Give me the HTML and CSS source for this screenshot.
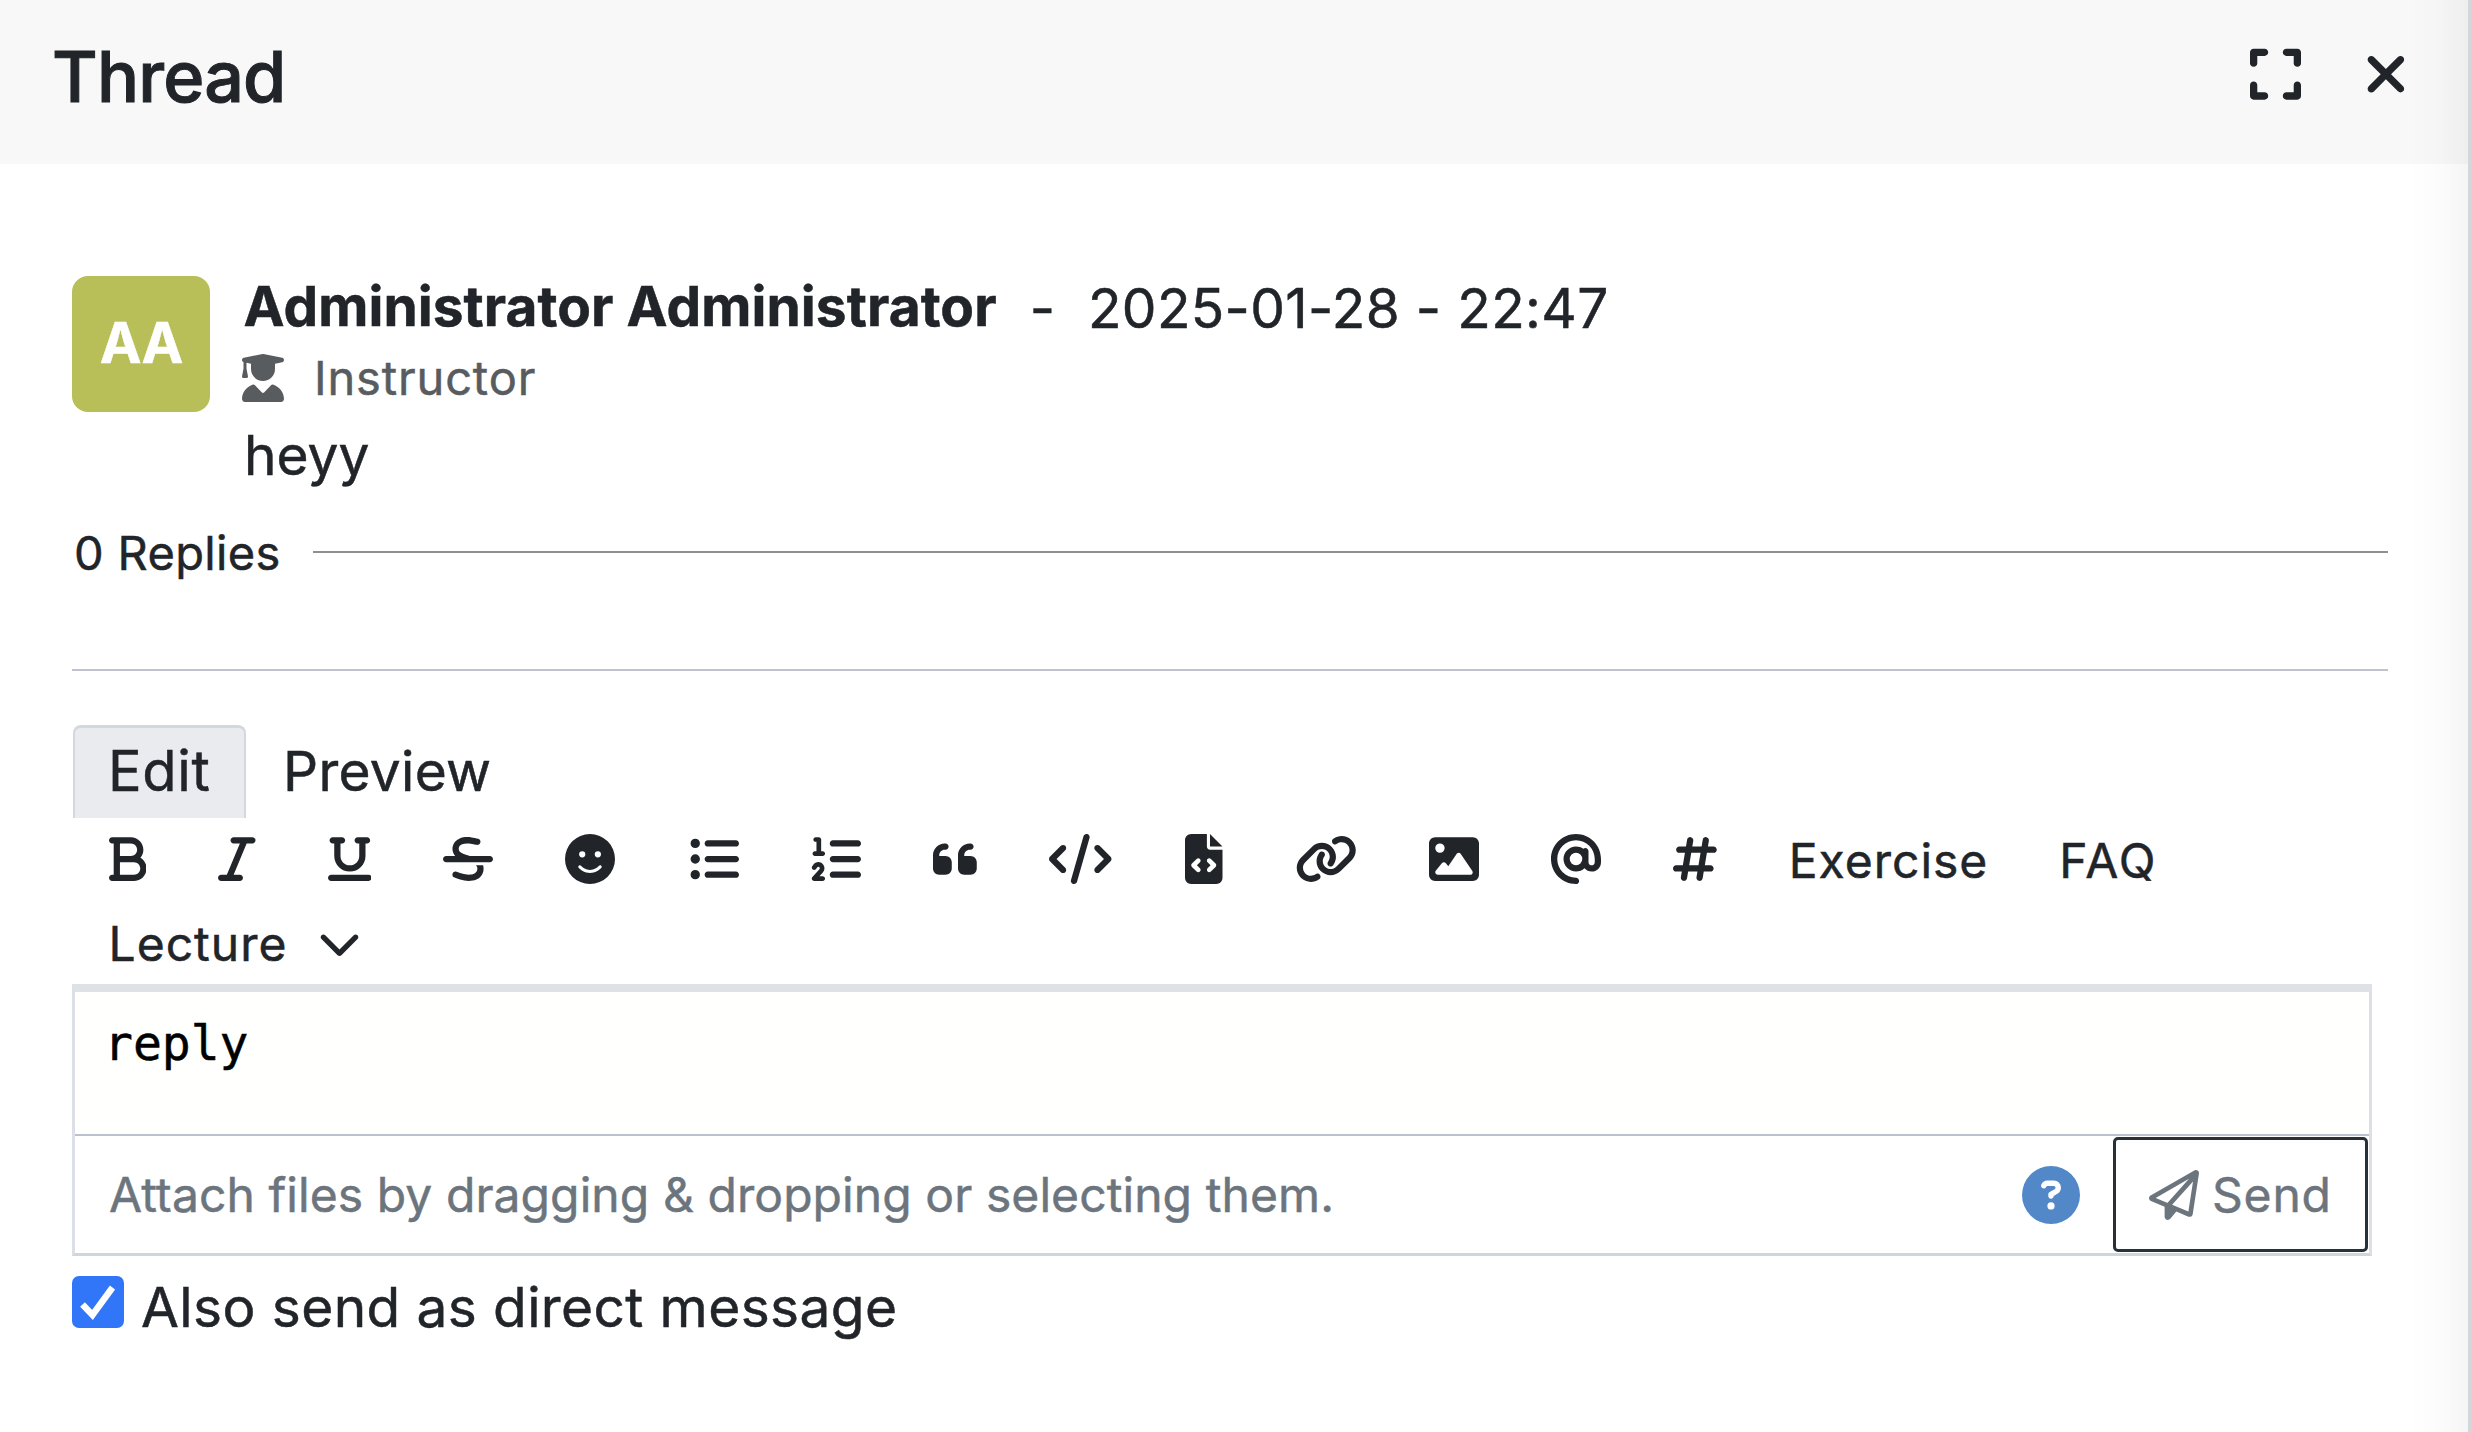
FILE: index.html
```html
<!DOCTYPE html>
<html lang="en">
<head>
<meta charset="utf-8">
<title>Thread</title>
<link rel="stylesheet" href="styles.css">
</head>
<body>
<aside class="panel">
  <header class="panel-header">
    <h1 class="panel-title">Thread</h1>
    <div class="panel-actions">
      <svg class="icon icon-expand" viewBox="0 0 448 512"><path d="M32 32C14.3 32 0 46.3 0 64v96c0 17.7 14.3 32 32 32s32-14.3 32-32V96h64c17.7 0 32-14.3 32-32s-14.3-32-32-32H32zM64 352c0-17.7-14.3-32-32-32s-32 14.3-32 32v96c0 17.7 14.3 32 32 32h96c17.7 0 32-14.3 32-32s-14.3-32-32-32H64V352zM320 32c-17.7 0-32 14.3-32 32s14.3 32 32 32h64v64c0 17.7 14.3 32 32 32s32-14.3 32-32V64c0-17.7-14.3-32-32-32H320zM448 352c0-17.7-14.3-32-32-32s-32 14.3-32 32v64H320c-17.7 0-32 14.3-32 32s14.3 32 32 32h96c17.7 0 32-14.3 32-32V352z"/></svg>
      <svg class="icon icon-close" viewBox="0 0 384 512"><path d="M342.6 150.6c12.5-12.5 12.5-32.8 0-45.3s-32.8-12.5-45.3 0L192 210.7 86.6 105.4c-12.5-12.5-32.8-12.5-45.3 0s-12.5 32.8 0 45.3L146.7 256 41.4 361.4c-12.5 12.5-12.5 32.8 0 45.3s32.8 12.5 45.3 0L192 301.3 297.4 406.6c12.5 12.5 32.8 12.5 45.3 0s12.5-32.8 0-45.3L237.3 256 342.6 150.6z"/></svg>
    </div>
  </header>

  <main class="panel-body">
    <article class="post">
      <div class="avatar">AA</div>
      <div class="post-content">
        <div class="post-meta">
          <strong class="author">Administrator Administrator</strong>
          <span class="dash">-</span>
          <time class="date">2025-01-28 - 22:47</time>
        </div>
        <div class="role">
          <svg class="icon icon-role" viewBox="0 0 448 512"><path d="M219.3 .5c3.1-.6 6.3-.6 9.4 0l200 40C439.9 42.7 448 52.6 448 64s-8.1 21.3-19.3 23.5L352 102.9V160c0 70.7-57.3 128-128 128s-128-57.3-128-128V102.9L48 93.3v65.1l15.7 78.4c.9 4.7-.3 9.6-3.3 13.3s-7.6 5.9-12.4 5.9H16c-4.8 0-9.3-2.1-12.4-5.9s-4.3-8.6-3.3-13.3L16 158.4V86.6C6.5 83.3 0 74.3 0 64C0 52.6 8.1 42.7 19.3 40.5l200-40zM111.9 327.7c10.5-3.4 21.8 .4 29.4 8.5l71 75.5c6.3 6.7 17 6.7 23.3 0l71-75.5c7.6-8.1 18.9-11.9 29.4-8.5C401 348.6 448 409.4 448 481.3c0 17-13.8 30.7-30.7 30.7H30.7C13.8 512 0 498.2 0 481.3c0-71.9 47-132.7 111.9-153.6z"/></svg>
          <span>Instructor</span>
        </div>
        <p class="post-text">heyy</p>
      </div>
    </article>

    <div class="replies"><span>0 Replies</span><i class="replies-line"></i></div>
    <hr class="divider">

    <nav class="tabs">
      <div class="tab tab-active">Edit</div>
      <div class="tab">Preview</div>
    </nav>

    <div class="toolbar">
      <span class="tool"><svg class="icon w384" viewBox="0 0 384 512"><path d="M0 64C0 46.3 14.3 32 32 32H80 96 224c70.7 0 128 57.3 128 128c0 31.3-11.3 60.1-30 82.3c37.1 22.4 62 63.1 62 109.7c0 70.7-57.3 128-128 128H96 80 32c-17.7 0-32-14.3-32-32s14.3-32 32-32H48V256 96H32C14.3 96 0 81.7 0 64zM224 224c35.3 0 64-28.7 64-64s-28.7-64-64-64H112V224H224zM112 288V416H256c35.3 0 64-28.7 64-64s-28.7-64-64-64H224 112z"/></svg></span>
      <span class="tool"><svg class="icon w384" viewBox="0 0 384 512"><path d="M128 64c0-17.7 14.3-32 32-32H352c17.7 0 32 14.3 32 32s-14.3 32-32 32H293.3L160 416h64c17.7 0 32 14.3 32 32s-14.3 32-32 32H32c-17.7 0-32-14.3-32-32s14.3-32 32-32H90.7L224 96H160c-17.7 0-32-14.3-32-32z"/></svg></span>
      <span class="tool"><svg class="icon w448" viewBox="0 0 448 512"><path d="M16 64c0-17.7 14.3-32 32-32h96c17.7 0 32 14.3 32 32s-14.3 32-32 32H128V224c0 53 43 96 96 96s96-43 96-96V96H304c-17.7 0-32-14.3-32-32s14.3-32 32-32h96c17.7 0 32 14.3 32 32s-14.3 32-32 32H384V224c0 88.4-71.6 160-160 160s-160-71.6-160-160V96H48C30.3 96 16 81.7 16 64zM0 448c0-17.7 14.3-32 32-32H416c17.7 0 32 14.3 32 32s-14.3 32-32 32H32c-17.7 0-32-14.3-32-32z"/></svg></span>
      <span class="tool"><svg class="icon w512" viewBox="0 0 512 512"><path d="M161.3 144c3.2-17.2 14-30.1 33.7-38.6c21.1-9 51.8-12.3 88.6-6.5c11.9 1.9 48.8 9.1 60.1 12c17.1 4.5 34.6-5.6 39.2-22.7s-5.6-34.6-22.7-39.2c-14.3-3.8-53.6-11.4-66.6-13.4c-44.7-7-88.3-4.2-123.7 10.9c-36.5 15.6-64.4 44.8-71.8 87.3c-.1 .6-.2 1.1-.2 1.7c-2.8 23.9 .5 45.6 10.1 64.6c4.5 9 10.2 16.9 16.7 23.9H32c-17.7 0-32 14.3-32 32s14.3 32 32 32H480c17.7 0 32-14.3 32-32s-14.3-32-32-32H270.1c-.1 0-.3-.1-.4-.1l-1.1-.3c-36-10.8-65.2-19.6-85.2-33.1c-9.3-6.3-15-12.6-18.2-19.1c-3.1-6.1-5.2-14.6-3.8-27.4zM348.9 337.2c2.7 6.5 4.4 15.8 1.9 30.1c-3 17.6-13.8 30.8-33.9 39.4c-21.1 9-51.7 12.3-88.5 6.5c-18-2.9-49.1-13.5-74.4-22.1c-5.6-1.9-11-3.7-15.9-5.4c-16.8-5.6-34.9 3.5-40.5 20.3s3.5 34.9 20.3 40.5c3.6 1.2 7.9 2.7 12.7 4.3c24.9 8.5 63.6 21.7 87.6 25.6l.2 0c44.7 7 88.3 4.2 123.7-10.9c36.5-15.6 64.4-44.8 71.8-87.3c3.6-21 2.7-40.4-3.1-58.1H335.1c7 5.6 11.4 11.2 13.9 17.2z"/></svg></span>
      <span class="tool"><svg class="icon w512" viewBox="0 0 512 512"><path d="M256 512A256 256 0 1 0 256 0a256 256 0 1 0 0 512zM164.1 325.5C182 346.2 212.6 368 256 368s74-21.8 91.9-42.5c5.8-6.7 15.9-7.4 22.6-1.6s7.4 15.9 1.6 22.6C349.8 372.1 311.1 400 256 400s-93.8-27.9-116.1-53.5c-5.8-6.7-5.1-16.8 1.6-22.6s16.8-5.1 22.6 1.6zM144.4 208a32 32 0 1 1 64 0 32 32 0 1 1 -64 0zm192-32a32 32 0 1 1 0 64 32 32 0 1 1 0-64z"/></svg></span>
      <span class="tool tool-list"><svg class="icon w512" viewBox="0 0 512 512"><path d="M64 144a48 48 0 1 0 0-96 48 48 0 1 0 0 96zM192 64c-17.7 0-32 14.3-32 32s14.3 32 32 32H480c17.7 0 32-14.3 32-32s-14.3-32-32-32H192zm0 160c-17.7 0-32 14.3-32 32s14.3 32 32 32H480c17.7 0 32-14.3 32-32s-14.3-32-32-32H192zm0 160c-17.7 0-32 14.3-32 32s14.3 32 32 32H480c17.7 0 32-14.3 32-32s-14.3-32-32-32H192zM64 464a48 48 0 1 0 0-96 48 48 0 1 0 0 96zm48-208a48 48 0 1 0 -96 0 48 48 0 1 0 96 0z"/></svg></span>
      <span class="tool"><svg class="icon w512" viewBox="0 0 512 512"><path d="M24 56c0-13.3 10.7-24 24-24H80c13.3 0 24 10.7 24 24V176h16c13.3 0 24 10.7 24 24s-10.7 24-24 24H40c-13.3 0-24-10.7-24-24s10.7-24 24-24H56V80H48C34.7 80 24 69.3 24 56zM86.7 341.2c-6.5-7.4-18.3-6.9-24 1.2L51.5 357.9c-7.7 10.8-22.7 13.3-33.5 5.6s-13.3-22.7-5.6-33.5l11.1-15.6c23.7-33.2 72.3-35.6 99.2-4.9c21.3 24.4 20.8 60.9-1.1 84.7L86.8 432H120c13.3 0 24 10.7 24 24s-10.7 24-24 24H32c-9.5 0-18.2-5.6-22-14.4s-2.1-18.9 4.3-25.9l72-78c5.3-5.8 5.4-14.6 .3-20.5zM224 64H480c17.7 0 32 14.3 32 32s-14.3 32-32 32H224c-17.7 0-32-14.3-32-32s14.3-32 32-32zm0 160H480c17.7 0 32 14.3 32 32s-14.3 32-32 32H224c-17.7 0-32-14.3-32-32s14.3-32 32-32zm0 160H480c17.7 0 32 14.3 32 32s-14.3 32-32 32H224c-17.7 0-32-14.3-32-32s14.3-32 32-32z"/></svg></span>
      <span class="tool"><svg class="icon w448" viewBox="0 0 448 512"><path d="M0 216C0 149.7 53.7 96 120 96h8c17.7 0 32 14.3 32 32s-14.3 32-32 32h-8c-30.9 0-56 25.1-56 56v8h64c35.3 0 64 28.7 64 64v64c0 35.3-28.7 64-64 64H64c-35.3 0-64-28.7-64-64V320 288 216zm256 0c0-66.3 53.7-120 120-120h8c17.7 0 32 14.3 32 32s-14.3 32-32 32h-8c-30.9 0-56 25.1-56 56v8h64c35.3 0 64 28.7 64 64v64c0 35.3-28.7 64-64 64H320c-35.3 0-64-28.7-64-64V320 288 216z"/></svg></span>
      <span class="tool"><svg class="icon w640" viewBox="0 0 640 512"><path d="M392.8 1.2c-17-4.9-34.7 5-39.6 22l-128 448c-4.9 17 5 34.7 22 39.6s34.7-5 39.6-22l128-448c4.9-17-5-34.7-22-39.6zm80.6 120.1c-12.5 12.5-12.5 32.8 0 45.3L562.7 256l-89.4 89.4c-12.5 12.5-12.5 32.8 0 45.3s32.8 12.5 45.3 0l112-112c12.5-12.5 12.5-32.8 0-45.3l-112-112c-12.5-12.5-32.8-12.5-45.3 0zm-306.7 0c-12.5-12.5-32.8-12.5-45.3 0l-112 112c-12.5 12.5-12.5 32.8 0 45.3l112 112c12.5 12.5 32.8 12.5 45.3 0s12.5-32.8 0-45.3L77.3 256l89.4-89.4c12.5-12.5 12.5-32.8 0-45.3z"/></svg></span>
      <span class="tool tool-file"><svg class="icon w384" viewBox="0 0 384 512"><path d="M64 0C28.7 0 0 28.7 0 64V448c0 35.3 28.7 64 64 64H320c35.3 0 64-28.7 64-64V160H256c-17.7 0-32-14.3-32-32V0H64zM256 0V128H384L256 0zM153 289l-31 31 31 31c9.4 9.4 9.4 24.6 0 33.9s-24.6 9.4-33.9 0L71 337c-9.4-9.4-9.4-24.6 0-33.9l48-48c9.4-9.4 24.6-9.4 33.9 0s9.4 24.6 0 33.9zM265 255l48 48c9.4 9.4 9.4 24.6 0 33.9l-48 48c-9.4 9.4-24.6 9.4-33.9 0s-9.4-24.6 0-33.9l31-31-31-31c-9.4-9.4-9.4-24.6 0-33.9s24.6-9.4 33.9 0z"/></svg></span>
      <span class="tool"><svg class="icon w640" viewBox="0 0 640 512"><path d="M579.8 267.7c56.5-56.5 56.5-148 0-204.5c-50-50-128.8-56.5-186.3-15.4l-1.6 1.1c-14.4 10.3-17.7 30.3-7.4 44.6s30.3 17.7 44.6 7.4l1.6-1.1c32.1-22.9 76-19.3 103.8 8.6c31.5 31.5 31.5 82.5 0 114L422.3 334.8c-31.5 31.5-82.5 31.5-114 0c-27.9-27.9-31.5-71.8-8.6-103.8l1.1-1.6c10.3-14.4 6.9-34.4-7.4-44.6s-34.4-6.9-44.6 7.4l-1.1 1.6C206.5 251.2 213 330 263 380c56.5 56.5 148 56.5 204.5 0L579.8 267.7zM60.2 244.3c-56.5 56.5-56.5 148 0 204.5c50 50 128.8 56.5 186.3 15.4l1.6-1.1c14.4-10.3 17.7-30.3 7.4-44.6s-30.3-17.7-44.6-7.4l-1.6 1.1c-32.1 22.9-76 19.3-103.8-8.6C74 372 74 321 105.5 289.5L217.7 177.2c31.5-31.5 82.5-31.5 114 0c27.9 27.9 31.5 71.8 8.6 103.9l-1.1 1.6c-10.3 14.4-6.9 34.4 7.4 44.6s34.4 6.9 44.6-7.4l1.1-1.6C433.5 260.8 427 182 377 132c-56.5-56.5-148-56.5-204.5 0L60.2 244.3z"/></svg></span>
      <span class="tool"><svg class="icon w512" viewBox="0 0 512 512"><path d="M0 96C0 60.7 28.7 32 64 32H448c35.3 0 64 28.7 64 64V416c0 35.3-28.7 64-64 64H64c-35.3 0-64-28.7-64-64V96zM323.8 202.5c-4.5-6.6-11.9-10.5-19.8-10.5s-15.4 3.9-19.8 10.5l-87 127.6L170.7 297c-4.6-5.7-11.5-9-18.7-9s-14.2 3.3-18.7 9l-64 80c-5.8 7.2-6.9 17.1-2.9 25.4s12.4 13.6 21.6 13.6h96 32H424c8.9 0 17.1-4.9 21.2-12.8s3.6-17.4-1.4-24.7l-120-176zM112 192a48 48 0 1 0 0-96 48 48 0 1 0 0 96z"/></svg></span>
      <span class="tool"><svg class="icon w512" viewBox="0 0 512 512"><path d="M256 64C150 64 64 150 64 256s86 192 192 192c17.7 0 32 14.3 32 32s-14.3 32-32 32C114.6 512 0 397.4 0 256S114.6 0 256 0S512 114.6 512 256v32c0 53-43 96-96 96c-29.3 0-55.6-13.2-73.2-33.9C320 371.1 289.5 384 256 384c-70.7 0-128-57.3-128-128s57.3-128 128-128c27.9 0 53.7 8.9 74.7 24.1c5.7-5 13.1-8.1 21.3-8.1c17.7 0 32 14.3 32 32v80 32c0 17.7 14.3 32 32 32s32-14.3 32-32V256c0-106-86-192-192-192zm64 192a64 64 0 1 0 -128 0 64 64 0 1 0 128 0z"/></svg></span>
      <span class="tool"><svg class="icon w448" viewBox="0 0 448 512"><path d="M181.3 32.4c17.4 2.9 29.2 19.4 26.3 36.8L197.8 128h95.1l11.5-69.3c2.9-17.4 19.4-29.2 36.8-26.3s29.2 19.4 26.3 36.8L357.8 128H416c17.7 0 32 14.3 32 32s-14.3 32-32 32H347.1L325.8 320H384c17.7 0 32 14.3 32 32s-14.3 32-32 32H315.1l-11.5 69.3c-2.9 17.4-19.4 29.2-36.8 26.3s-29.2-19.4-26.3-36.8l9.8-58.7H155.1l-11.5 69.3c-2.9 17.4-19.4 29.2-36.8 26.3s-29.2-19.4-26.3-36.8L90.2 384H32c-17.7 0-32-14.3-32-32s14.3-32 32-32h68.9l21.3-128H64c-17.7 0-32-14.3-32-32s14.3-32 32-32h68.9l11.5-69.3c2.9-17.4 19.4-29.2 36.8-26.3zM187.1 192L165.8 320h95.1l21.3-128H187.1z"/></svg></span>
      <span class="tool tool-text">Exercise</span>
      <span class="tool tool-text tool-faq">FAQ</span>
      <span class="tool tool-lecture">Lecture <svg class="icon icon-chevron" viewBox="0 0 512 512"><path d="M233.4 406.6c12.5 12.5 32.8 12.5 45.3 0l192-192c12.5-12.5 12.5-32.8 0-45.3s-32.8-12.5-45.3 0L256 338.7 86.6 169.4c-12.5-12.5-32.8-12.5-45.3 0s-12.5 32.8 0 45.3l192 192z"/></svg></span>
    </div>

    <section class="editor">
      <div class="editor-input">reply</div>
      <div class="editor-footer">
        <span class="attach">Attach files by dragging &amp; dropping or selecting them.</span>
        <svg class="icon-help" viewBox="0 0 512 512"><path d="M256 512A256 256 0 1 0 256 0a256 256 0 1 0 0 512zM169.8 165.3c7.9-22.3 29.1-37.3 52.8-37.3h58.3c34.9 0 63.1 28.3 63.1 63.1c0 22.6-12.1 43.5-31.7 54.8L280 264.4c-.2 13-10.9 23.6-24 23.6c-13.3 0-24-10.7-24-24V250.5c0-8.6 4.6-16.5 12.1-20.8l44.3-25.4c4.7-2.7 7.6-7.7 7.6-13.1c0-8.4-6.8-15.1-15.1-15.1H222.6c-3.4 0-6.4 2.1-7.5 5.3l-.4 1.2c-4.4 12.5-18.2 19-30.6 14.6s-19-18.2-14.6-30.6l.4-1.2zM224 352a32 32 0 1 1 64 0 32 32 0 1 1 -64 0z"/></svg>
        <button class="send" type="button">
          <svg class="icon w512" viewBox="0 0 512 512"><path d="M16.1 260.2c-22.6 12.9-20.5 47.3 3.6 57.3L160 376V479.3c0 18.1 14.6 32.7 32.7 32.7c9.7 0 18.9-4.3 25.1-11.8l62-74.3 123.9 51.6c18.9 7.9 40.8-4.5 43.9-24.7l64-416c1.9-12.1-3.4-24.3-13.5-31.2s-23.3-7.5-34-1.4l-448 256zm52.1 25.5L409.7 90.6 190.1 336l1.2 1L68.2 285.7zM403.3 425.4L236.7 355.9 450.8 116.6 403.3 425.4z"/></svg>
          <span>Send</span>
        </button>
      </div>
    </section>

    <div class="direct">
      <span class="checkbox"><svg viewBox="0 0 52 52"><path d="M10.5 28.5 20.5 39 40.500 11.500"/></svg></span>
      <span class="direct-label">Also send as direct message</span>
    </div>
  </main>
</aside>
</body>
</html>
```
FILE: styles.css
```css
* {
  box-sizing: border-box;
}

body {
  margin: 0;
  background: #fff;
  color: #212529;
  font-family: Inter, "Liberation Sans", sans-serif;
  font-size: 55px;
  line-height: 60px;
  -webkit-text-stroke: 0.5px currentColor;
}

.panel {
  position: relative;
  height: 1432px;
  overflow: hidden;
  border-right: 4px solid #d2d7dc;
}

/* soft shade along the panel's resize edge */
.panel::after {
  content: "";
  position: absolute;
  top: 0;
  right: 0;
  bottom: 0;
  width: 60px;
  background: linear-gradient(to right, rgba(0, 0, 0, 0), rgba(0, 0, 0, 0.01) 50%, rgba(0, 0, 0, 0.038));
}

.icon {
  display: block;
  flex: none;
  height: 50px;
  fill: currentColor;
}

.w384 { width: 37.5px; }
.w448 { width: 43.75px; }
.w512 { width: 50px; }
.w640 { width: 62.5px; }

.panel-header {
  display: flex;
  justify-content: space-between;
  height: 164px;
  padding: 0 60px 0 52px;
  background: #f8f8f8;
}

.panel-title {
  margin: 0;
  font-size: 70px;
  font-weight: 500;
  line-height: 153px;
  letter-spacing: -0.8px;
  -webkit-text-stroke-width: 1px;
}

.panel-actions {
  display: flex;
  align-items: center;
  gap: 63px;
  height: 149px;
}

.icon-expand {
  width: 51px;
  height: 58.3px;
}

.icon-close {
  width: 43.8px;
  height: 58.4px;
}

.panel-body {
  padding: 112px 80px 0 72px;
}

.post {
  display: flex;
  gap: 32px;
}

.avatar {
  width: 138px;
  height: 136px;
  border-radius: 16px;
  background: #b8bf58;
  color: #fff;
  font-size: 56px;
  font-weight: 700;
  line-height: 135px;
  text-align: center;
  letter-spacing: -1px;
}

.post-meta {
  display: flex;
  height: 60px;
  margin-left: 1.5px;
}

.author {
  font-weight: 700;
  letter-spacing: 0.08px;
}

.dash {
  margin: 2px 33px 0 33px;
}

.date {
  margin-top: 2px;
  letter-spacing: 0.35px;
}

.role {
  display: flex;
  align-items: center;
  gap: 30px;
  margin-top: 12px;
  color: #585c5f;
  font-size: 47px;
  letter-spacing: 0.85px;
}

.icon-role {
  width: 42px;
  height: 48px;
}

.post-text {
  margin: 17px 0 0 2px;
}

.replies {
  display: flex;
  align-items: center;
  gap: 33px;
  margin-top: 38px;
  padding-left: 2px;
  font-size: 47px;
  letter-spacing: 0.35px;
}

.replies-line {
  flex: 1;
  height: 2px;
  margin-top: -2px;
  margin-left: -1px;
  background: #8f8f90;
}

.divider {
  height: 2px;
  margin: 86px 0 54px;
  border: 0;
  background: #c0c3cd;
}

.tabs {
  display: flex;
}

.tab {
  height: 93px;
  padding: 3px 36px 0 37px;
  line-height: 87px;
  letter-spacing: 0.3px;
}

.tab-active {
  width: 173px;
  margin: 0 0 0 1px;
  padding: 0 0 0 33px;
  border: 2px solid #d3d8de;
  border-top-width: 3px;
  border-bottom: 0;
  border-radius: 8px 8px 0 0;
  background: #eaebef;
  font-size: 56px;
  letter-spacing: 0.7px;
}

.toolbar {
  display: flex;
  flex-wrap: wrap;
  row-gap: 5px;
  height: 166px;
  padding: 1px 0 0 0.5px;
}

.tool {
  display: flex;
  align-items: center;
  height: 80px;
  padding: 0 36px;
  font-size: 48px;
}

.tool-list {
  padding-left: 38px;
}

.tool-file {
  padding-left: 37.5px;
}

.tool-text {
  padding-top: 4px;
  letter-spacing: 1px;
}

.tool-faq {
  margin-left: -1px;
  letter-spacing: 2px;
}

.tool-lecture {
  gap: 31px;
  letter-spacing: 1px;
}

.icon-chevron {
  width: 43px;
  height: 43px;
  margin-top: -4px;
}

.editor {
  width: 2300px;
  border: 3px solid #dcdfe6;
  border-top: 8px solid #dee2e6;
  border-bottom: 3px solid #d0d4dd;
}

.editor-input {
  height: 144px;
  padding: 21px 29px 0;
  border-bottom: 2px solid #bcc0cd;
  background: #fffffd;
  color: #000;
  font-family: "DejaVu Sans Mono", monospace;
  font-size: 48px;
}

.editor-footer {
  display: flex;
  align-items: center;
  height: 117px;
  padding: 0 1px 0 34px;
  color: #6c757d;
  font-size: 48px;
}

.attach {
  flex: 1;
  letter-spacing: 0.08px;
}

.icon-help {
  width: 58px;
  height: 58px;
  margin: 1px 33px 0 0;
  fill: #5288c7;
}

.send {
  display: flex;
  align-items: center;
  gap: 13px;
  width: 255px;
  height: 115px;
  padding: 0 0 0 33px;
  border: 3px solid #27313a;
  border-radius: 5px;
  background: #fff;
  color: inherit;
  font: inherit;
  letter-spacing: 0.8px;
}

.direct {
  display: flex;
  gap: 17px;
  margin-top: 20px;
}

.checkbox {
  width: 52px;
  height: 52px;
  border-radius: 7px;
  background: #3175f8;
}

.checkbox svg {
  display: block;
  fill: none;
  stroke: #fff;
  stroke-width: 6.5;
}

.direct-label {
  margin-top: 1px;
  letter-spacing: 0.4px;
}
```
